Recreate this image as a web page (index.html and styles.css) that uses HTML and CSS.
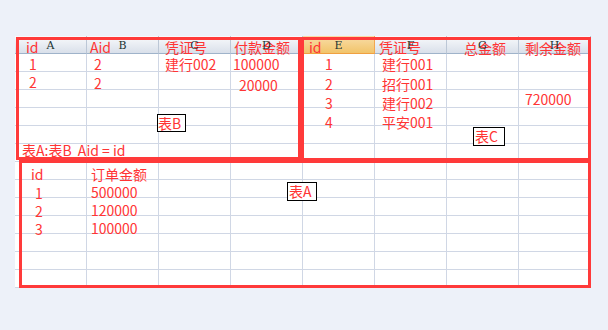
FILE: index.html
```html
<!DOCTYPE html>
<html lang="zh">
<head>
<meta charset="utf-8">
<title>表A 表B 表C</title>
<link rel="stylesheet" href="styles.css">
</head>
<body>
<div class="page">
  <div class="sheet">
    <div class="hdr">
      <div class="hc"><span class="t p11 v2">id</span><b>A</b></div>
      <div class="hc"><span class="t p3 v2">Aid</span><b>B</b></div>
      <div class="hc"><span class="t p6 v2">凭证号</span><b>C</b></div>
      <div class="hc"><span class="t p3 v2">付款金额</span><b>D</b></div>
      <div class="hc sel"><span class="t p6 v2">id</span><b>E</b></div>
      <div class="hc"><span class="t p4 v2">凭证号</span><b>F</b></div>
      <div class="hc"><span class="t p17 v3">总金额</span><b>G</b></div>
      <div class="hc"><span class="t p6 v3">剩余金额</span><b>H</b></div>
    </div>
    <div class="row">
      <div class="c p14 v1">1</div><div class="c p7 v1">2</div><div class="c p6 v1">建行002</div><div class="c p2 v1">100000</div>
      <div class="c p22 v1">1</div><div class="c p7 v1">建行001</div><div class="c"></div><div class="c"></div>
    </div>
    <div class="row">
      <div class="c p14 v1">2</div><div class="c p7 v2">2</div><div class="c"></div><div class="c p8 v4">20000</div>
      <div class="c p22 v3">2</div><div class="c p7 v3">招行001</div><div class="c"></div><div class="c"></div>
    </div>
    <div class="row">
      <div class="c"></div><div class="c"></div><div class="c"></div><div class="c"></div>
      <div class="c p22 v4">3</div><div class="c p7 v4">建行002</div><div class="c"></div><div class="c p6 v0">720000</div>
    </div>
    <div class="row">
      <div class="c"></div><div class="c"></div><div class="c"></div><div class="c"></div>
      <div class="c p22 v5">4</div><div class="c p7 v5">平安001</div><div class="c"></div><div class="c"></div>
    </div>
    <div class="row">
      <div class="c"></div><div class="c"></div><div class="c"></div><div class="c"></div>
      <div class="c"></div><div class="c"></div><div class="c"></div><div class="c"></div>
    </div>
    <div class="row">
      <div class="c p7"><span class="rel">表A:表B&nbsp;&nbsp;Aid&nbsp;=&nbsp;id</span></div><div class="c"></div><div class="c"></div><div class="c"></div>
      <div class="c"></div><div class="c"></div><div class="c"></div><div class="c"></div>
    </div>
    <div class="row">
      <div class="c p16 v3">id</div><div class="c p4 v3">订单金额</div><div class="c"></div><div class="c"></div>
      <div class="c"></div><div class="c"></div><div class="c"></div><div class="c"></div>
    </div>
    <div class="row">
      <div class="c p20 v4">1</div><div class="c p4 v3">500000</div><div class="c"></div><div class="c"></div>
      <div class="c"></div><div class="c"></div><div class="c"></div><div class="c"></div>
    </div>
    <div class="row">
      <div class="c p20 v4">2</div><div class="c p4 v3">120000</div><div class="c"></div><div class="c"></div>
      <div class="c"></div><div class="c"></div><div class="c"></div><div class="c"></div>
    </div>
    <div class="row">
      <div class="c p20 v4">3</div><div class="c p4 v3">100000</div><div class="c"></div><div class="c"></div>
      <div class="c"></div><div class="c"></div><div class="c"></div><div class="c"></div>
    </div>
    <div class="row">
      <div class="c"></div><div class="c"></div><div class="c"></div><div class="c"></div>
      <div class="c"></div><div class="c"></div><div class="c"></div><div class="c"></div>
    </div>
    <div class="row">
      <div class="c"></div><div class="c"></div><div class="c"></div><div class="c"></div>
      <div class="c"></div><div class="c"></div><div class="c"></div><div class="c"></div>
    </div>
    <div class="row">
      <div class="c"></div><div class="c"></div><div class="c"></div><div class="c"></div>
      <div class="c"></div><div class="c"></div><div class="c"></div><div class="c"></div>
    </div>

    <div class="box box-b"></div>
    <div class="box box-c"></div>
    <div class="box box-a"></div>
    <div class="tag tag-b">表B</div>
    <div class="tag tag-c">表C</div>
    <div class="tag tag-a">表A</div>
  </div>
</div>
</body>
</html>
```
FILE: styles.css
```css
* { box-sizing: border-box; }
body {
  margin: 0;
  background: #edf1f9;
  font-family: "Noto Sans CJK SC", "Noto Sans", sans-serif;
}
.page { padding: 36px 0 0 15px; }
.sheet {
  position: relative;
  width: 576px;
  background: #fff;
  color: #ff3434;
  font-size: 14px;
  line-height: 18px;
}
.hdr, .row { display: flex; height: 18px; }
.hc {
  position: relative;
  flex: none;
  width: 72px;
  height: 18px;
  background: linear-gradient(#f9fafc, #d9e0ea);
  border-right: 1px solid #bcc7d6;
  border-bottom: 1px solid #9fb3ca;
  white-space: nowrap;
}
.hc.sel {
  background: linear-gradient(#f9dda8, #f1c46a);
  border-right-color: #f2a650;
  border-bottom-color: #f0a040;
}
.hc b {
  position: absolute;
  left: 0; right: 0; top: 1px;
  text-align: center;
  font: 11px/18px "DejaVu Serif", serif;
  font-weight: normal;
  color: #1d3434;
}
.hc .t { display: block; }
.c {
  flex: none;
  width: 72px;
  height: 18px;
  border-right: 1px solid #d0d7e5;
  border-bottom: 1px solid #d0d7e5;
  white-space: nowrap;
}
.rel { display: block; margin-top: -3px; }
.p2 { padding-left: 2px; }
.p3 { padding-left: 3px; }
.p4 { padding-left: 4px; }
.p6 { padding-left: 6px; }
.p7 { padding-left: 7px; }
.p8 { padding-left: 8px; }
.p11 { padding-left: 11px; }
.p14 { padding-left: 14px; }
.p16 { padding-left: 16px; }
.p17 { padding-left: 17px; }
.p20 { padding-left: 20px; }
.p22 { padding-left: 22px; }
.v0 { padding-top: 0; }
.v1 { padding-top: 1px; }
.v2 { padding-top: 2px; }
.v3 { padding-top: 3px; }
.v4 { padding-top: 4px; }
.v5 { padding-top: 5px; }
.box {
  position: absolute;
  border: 3px solid #ff3a3a;
}
.box-b { left: 1px; top: 1px; width: 285px; height: 123px; }
.box-c { left: 286px; top: 1px; width: 290px; height: 124px; }
.box-a { left: 4px; top: 124px; width: 572px; height: 128px; }
.tag {
  position: absolute;
  border: 1px solid #000;
  background: #fff;
  color: #ff3434;
  font-size: 14px;
  line-height: 16px;
  padding-left: 1px;
  white-space: nowrap;
}
.tag-b { left: 142px; top: 78px; width: 29px; height: 18px; padding-left: 0; }
.tag-c { left: 458px; top: 91px; width: 32px; height: 19px; }
.tag-a { left: 272px; top: 146px; width: 30px; height: 19px; }
```
